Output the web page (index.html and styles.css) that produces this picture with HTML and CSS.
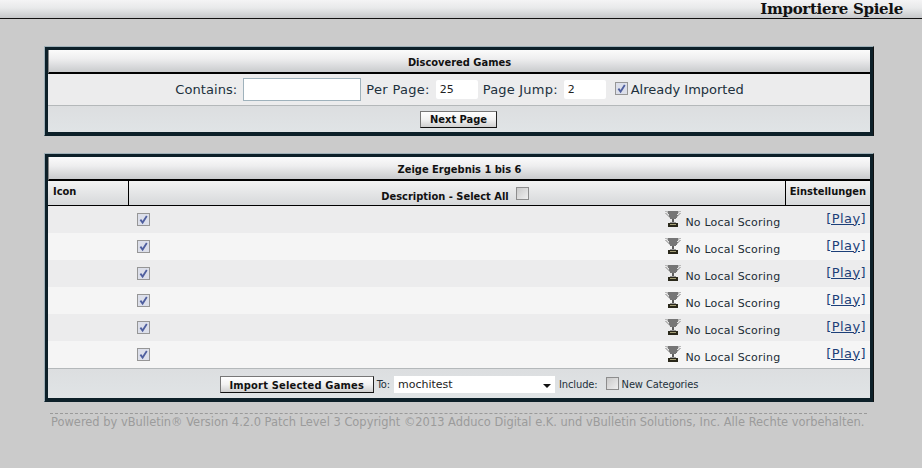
FILE: index.html
```html
<!DOCTYPE html>
<html lang="de">
<head>
<meta charset="utf-8">
<title>Importiere Spiele</title>
<link rel="stylesheet" href="styles.css">
</head>
<body>
<svg class="defs" width="0" height="0" aria-hidden="true">
  <symbol id="check" viewBox="0 0 13 13">
    <rect x=".5" y=".5" width="12" height="12" fill="#dcdfea" stroke="#969696"/>
    <path d="M3.4 6.600 5.600 9.600 9.800 3" fill="none" stroke="#4f5f9f" stroke-width="1.800"/>
  </symbol>
  <symbol id="trophy" viewBox="0 0 16 16" shape-rendering="crispEdges">
    <path d="M0 0h16v1h-1v1h1v1h-1v1h-1v1h-1v1h-1v1H4V6H3V5H2V4H1V3H0V2h1V1H0z" fill="#b9b9b9"/>
    <path d="M3 0h10v4l-1 1v1l-1 1v1H5V7L4 6V5L3 4z" fill="#767676"/>
    <path d="M1 1h1v1H1zM3 3h1v1H3zM14 1h1v1h-1zM12 3h1v1h-1zM2 2h1v1H2zM13 2h1v1h-1z" fill="#e6e6e6"/>
    <path d="M7 8h2v3H7z" fill="#5e5e5e"/>
    <path d="M5 11h6v1H5z" fill="#9a9a9a"/>
    <path d="M3 12h10v4H3z" fill="#2a281a"/>
    <path d="M5 13h6v1H5z" fill="#a59f78"/>
  </symbol>
</svg>

<header class="topbar"><h1 class="page-title">Importiere Spiele</h1></header>

<main class="content">
  <section class="panel panel-search">
    <h2 class="panel-title">Discovered Games</h2>
    <div class="filter-row">
      <label class="field field-contains">Contains:<span class="input input-contains"></span></label>
      <label class="field field-spaced">Per Page:<span class="input input-num">25</span></label>
      <label class="field field-jump">Page Jump:<span class="input input-num">2</span></label>
      <label class="field field-check"><svg class="cb"><use href="#check"/></svg>Already Imported</label>
    </div>
    <div class="panel-foot foot-next"><span class="btn btn-next">Next Page</span></div>
  </section>

  <section class="panel panel-results">
    <h2 class="panel-title">Zeige Ergebnis 1 bis 6</h2>
    <div class="grid-head">
      <div class="hcell hcell-icon">Icon</div>
      <div class="hcell hcell-desc">Description - Select All <span class="cb-empty"></span></div>
      <div class="hcell hcell-set">Einstellungen</div>
    </div>
    <div class="row row-a"><svg class="cb"><use href="#check"/></svg><span class="score"><svg class="trophy"><use href="#trophy"/></svg>No Local Scoring</span><a class="play" href="#">[Play]</a></div>
    <div class="row row-b"><svg class="cb"><use href="#check"/></svg><span class="score"><svg class="trophy"><use href="#trophy"/></svg>No Local Scoring</span><a class="play" href="#">[Play]</a></div>
    <div class="row row-a"><svg class="cb"><use href="#check"/></svg><span class="score"><svg class="trophy"><use href="#trophy"/></svg>No Local Scoring</span><a class="play" href="#">[Play]</a></div>
    <div class="row row-b"><svg class="cb"><use href="#check"/></svg><span class="score"><svg class="trophy"><use href="#trophy"/></svg>No Local Scoring</span><a class="play" href="#">[Play]</a></div>
    <div class="row row-a"><svg class="cb"><use href="#check"/></svg><span class="score"><svg class="trophy"><use href="#trophy"/></svg>No Local Scoring</span><a class="play" href="#">[Play]</a></div>
    <div class="row row-b"><svg class="cb"><use href="#check"/></svg><span class="score"><svg class="trophy"><use href="#trophy"/></svg>No Local Scoring</span><a class="play" href="#">[Play]</a></div>
    <div class="panel-foot foot-import">
      <span class="btn btn-import">Import Selected Games</span>
      <span class="foot-label foot-to">To:</span>
      <span class="select">mochitest<span class="arrow"></span></span>
      <span class="foot-label">Include:</span>
      <span class="cb-empty cb-cat"></span>
      <span class="foot-label">New Categories</span>
    </div>
  </section>

  <footer class="copyright">Powered by vBulletin® Version 4.2.0 Patch Level 3 Copyright ©2013 Adduco Digital e.K. und vBulletin Solutions, Inc. Alle Rechte vorbehalten.</footer>
</main>
</body>
</html>
```
FILE: styles.css
```css
* { box-sizing: border-box; }
html, body { margin: 0; padding: 0; }
body {
  width: 922px;
  height: 468px;
  overflow: hidden;
  background: #cbcbcb;
  font-family: "DejaVu Sans", sans-serif;
  color: #20303c;
}
.defs { position: absolute; }
.topbar {
  height: 19px;
  border-bottom: 1px solid #111;
  background: linear-gradient(#f4f4f5 0%, #e8e9ea 45%, #c6c8ca 100%);
  display: flex;
  justify-content: flex-end;
  padding-right: 19px;
}
.page-title {
  margin: 0;
  padding-top: 1px;
  font: bold 15px/16px "DejaVu Serif", serif;
  color: #111;
  letter-spacing: -0.3px;
}
.content { padding: 27px 48px 0 44px; }
.panel {
  border: 1px solid;
  border-color: #9fb0b8 #111 #0d2029 #9fb0b8;
  padding: 3px;
  background: #0d2029;
}
.panel-search { height: 90px; }
.panel-results { height: 249px; margin-top: 17px; }
.panel-title {
  margin: 0;
  height: 24px;
  border-bottom: 2px solid #000;
  border-left: 1px solid #888;
  padding-top: 3px;
  background: linear-gradient(#fbfbfb 0%, #eeeeef 40%, #c9cbcd 100%);
  text-align: center;
  font: bold 11px/20px "DejaVu Sans Condensed", "DejaVu Sans", sans-serif;
  color: #111;
}
.filter-row {
  height: 32px;
  background: #ececed;
  border-bottom: 1px solid #b4b8ba;
  display: flex;
  align-items: center;
  justify-content: center;
  gap: 5px;
  padding-left: 1px;
  font-size: 13px;
}
.field { display: flex; align-items: center; gap: 6px; white-space: nowrap; }
.field-contains { letter-spacing: 0.08px; }
.field-spaced { letter-spacing: 0.3px; }
.field-jump { letter-spacing: 0.2px; }
.input {
  display: block;
  height: 19px;
  background: #fff;
  font-size: 11px;
  line-height: 19px;
  padding-left: 4px;
  color: #222;
  border-radius: 2px;
  letter-spacing: 0;
}
.input-contains { width: 118px; height: 23px; border: 1px solid #9fb2bc; border-radius: 0; }
.input-num { width: 42px; }
.field-check { gap: 3px; margin-left: 4px; }
.cb { width: 13px; height: 13px; display: block; flex: none; }
.field-check .cb { margin-top: -3px; }
.panel-foot {
  background: linear-gradient(#dcdee0, #e0e4e6);
  display: flex;
  align-items: center;
  justify-content: center;
}
.foot-next { height: 26px; padding-right: 1px; }
.btn {
  display: block;
  height: 17px;
  background: linear-gradient(#fff 0%, #f2f2f2 50%, #cfcfcf 100%);
  border: 1px solid;
  border-color: #777 #222 #111 #777;
  font: bold 11px/15px "DejaVu Sans Condensed", "DejaVu Sans", sans-serif;
  color: #111;
  text-align: center;
}
.btn-next { width: 77px; }
.grid-head {
  height: 25px;
  display: grid;
  grid-template-columns: 81px 657px 1fr;
  border-bottom: 1px solid #000;
  background: linear-gradient(#f3f3f3, #d6d8da);
  font: bold 11px/14px "DejaVu Sans Condensed", "DejaVu Sans", sans-serif;
  color: #111;
}
.hcell { padding-top: 4px; }
.hcell-icon { padding-left: 5px; border-right: 1px solid #000; }
.hcell-desc {
  border-right: 1px solid #000;
  padding-top: 9px;
  padding-right: 4px;
  display: flex;
  justify-content: center;
  gap: 7px;
}
.hcell-set { text-align: center; padding-top: 4px; }
.cb-empty {
  display: block;
  width: 13px;
  height: 13px;
  background: linear-gradient(135deg, #c9c9c9, #efefef);
  border: 1px solid #8d8d8d;
}
.hcell-desc .cb-empty { margin-top: -3px; }
.row {
  height: 27px;
  display: flex;
  align-items: center;
  padding: 0 4px 0 89px;
  font-size: 11px;
}
.row-a { background: #ececed; }
.row-b { background: #f5f5f5; }
.score {
  margin-left: auto;
  display: flex;
  align-items: center;
  gap: 4px;
  padding-top: 6px;
  color: #222d36;
  letter-spacing: 0.2px;
}
.trophy { width: 16px; height: 16px; margin-top: -8px; flex: none; }
.play {
  margin-left: 46px;
  margin-top: -3px;
  font-size: 13px;
  line-height: 15px;
  letter-spacing: 0.4px;
  color: #1c3f78;
  white-space: nowrap;
}
.foot-import {
  height: 30px;
  border-top: 1px solid #b4b8ba;
  padding-top: 2px;
  gap: 4px;
  font-size: 11px;
}
.btn-import { width: 154px; line-height: 17px; letter-spacing: 0.2px; }
.foot-label {
  padding-top: 1px;
  font: 11px/14px "DejaVu Sans Condensed", "DejaVu Sans", sans-serif;
  color: #22303a;
  white-space: nowrap;
  letter-spacing: -0.1px;
}
.foot-to { margin-left: -1px; }
.select {
  position: relative;
  display: block;
  width: 161px;
  height: 17px;
  background: #fff;
  font-size: 11px;
  line-height: 17px;
  padding-left: 4px;
  color: #222;
}
.arrow {
  position: absolute;
  right: 4px;
  top: 8px;
  border: 4px solid transparent;
  border-top-color: #111;
  border-bottom: 0;
}
.cb-cat { margin: -3px -1px 0 4px; }
.copyright {
  margin: 11px 0 0 6px;
  width: 817px;
  border-top: 1px dashed #999;
  padding: 1px 0 0 1px;
  font-size: 11.450px;
  line-height: 15px;
  color: #9b9b9b;
  white-space: nowrap;
}
```
